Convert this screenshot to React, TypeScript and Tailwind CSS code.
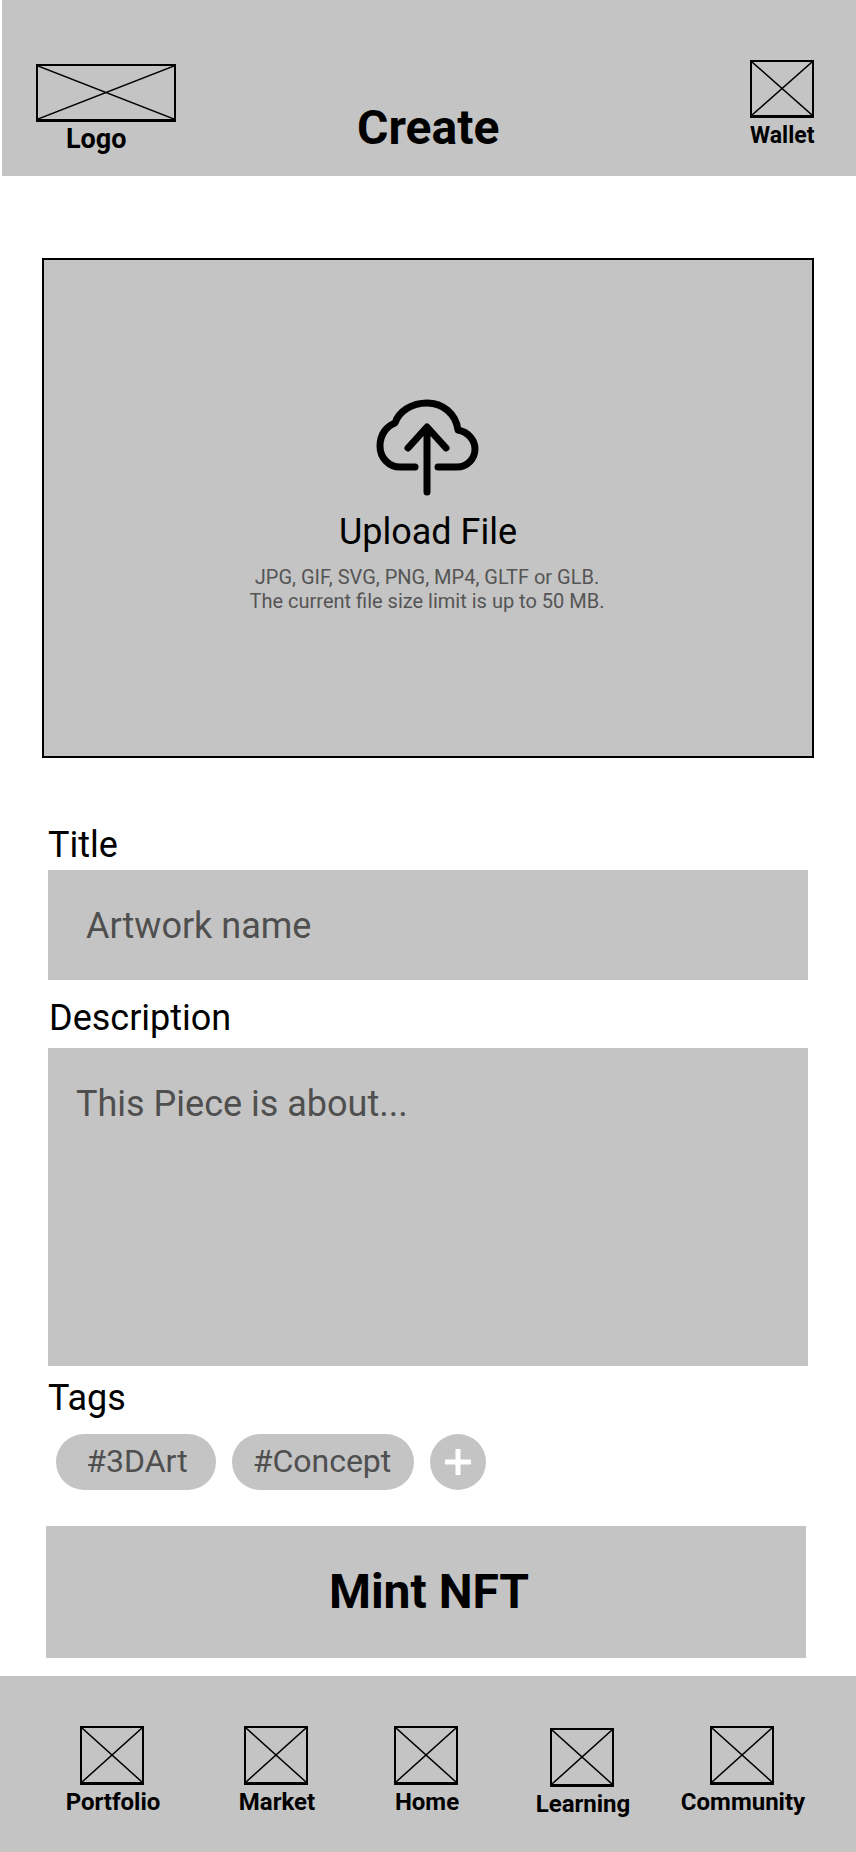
import React from 'react';

const XBox: React.FC<{ className: string }> = ({ className }) => (
  <div className={`border-2 border-black border-b-[3px] ${className}`}>
    <svg className="block w-full h-full" viewBox="0 0 100 100" preserveAspectRatio="none">
      <path d="M0 0L100 100M100 0L0 100" stroke="#000" strokeWidth="1.5" vectorEffect="non-scaling-stroke" fill="none" />
    </svg>
  </div>
);

const CloudUpload = () => (
  <svg width="104" height="98" viewBox="0 0 104 98" fill="none" stroke="#000" strokeWidth="7" strokeLinecap="round" strokeLinejoin="round" className="block">
    <path d="M39 68H24C13 68 4 59 4 47C4 35 11 27 19 24C23 12 36 4 51 4C67 4 80 15 82 31C92 33 99 41 99 50C99 60 91 68 81 68H62" />
    <path d="M32 49L51 28L70 49M51 29V93" />
  </svg>
);

const navItems = [
  { label: 'Portfolio', className: 'ml-[47px]' },
  { label: 'Market', className: 'ml-[34px]' },
  { label: 'Home', className: 'ml-[20px]' },
  { label: 'Learning', className: 'ml-[26px] mt-[2px]' },
  { label: 'Community', className: 'ml-[30px]' },
];

export default function App() {
  return (
    <div className="w-[856px] h-[1852px] bg-white overflow-hidden text-black font-['Roboto',sans-serif]">
      <header className="ml-[2px] h-[176px] bg-[#c4c4c4] flex">
        <div className="ml-[34px] mt-[64px] w-[140px]">
          <XBox className="w-[140px] h-[58px]" />
          <div className="ml-[30px] mt-[2px] text-[27px] leading-[30px] font-bold">Logo</div>
        </div>
        <h1 className="ml-[181px] mt-[100px] text-[48px] leading-[56px] font-bold">Create</h1>
        <div className="ml-auto mr-[40px] mt-[60px] w-[66px]">
          <XBox className="w-[64px] h-[58px]" />
          <div className="mt-[4px] text-[23px] leading-[27px] font-bold">Wallet</div>
        </div>
      </header>

      <section className="mt-[82px] ml-[42px] w-[772px] h-[500px] bg-[#c4c4c4] border-2 border-black flex flex-col items-center pt-[139px]">
        <CloudUpload />
        <div className="mt-[14px] text-[36px] leading-[42px]">Upload File</div>
        <div className="mt-[12px] pr-[2px] text-[20px] leading-[24px] text-[#555] text-center">
          JPG, GIF, SVG, PNG, MP4, GLTF or GLB.
          <br />
          The current file size limit is up to 50 MB.
        </div>
      </section>

      <div className="mt-[66px] ml-[48px] w-[760px]">
        <div className="text-[36px] leading-[42px]">Title</div>
        <div className="mt-[4px] h-[110px] bg-[#c4c4c4] flex items-center pl-[38px] pt-[2px] text-[36px] text-[#4f4f4f]">Artwork name</div>
        <div className="mt-[17px] ml-[1px] text-[36px] leading-[42px]">Description</div>
        <div className="mt-[9px] h-[318px] bg-[#c4c4c4] pl-[28px] pt-[34px] text-[36px] leading-[44px] text-[#4f4f4f]">This Piece is about...</div>
        <div className="mt-[11px] text-[36px] leading-[42px]">Tags</div>
        <div className="mt-[15px] ml-[8px] flex gap-[16px]">
          <div className="w-[160px] h-[56px] rounded-full bg-[#c4c4c4] flex items-center justify-center pl-[2px] pb-[2px] text-[32px] text-[#4f4f4f]">#3DArt</div>
          <div className="w-[182px] h-[56px] rounded-full bg-[#c4c4c4] flex items-center justify-center pr-[2px] pb-[2px] text-[32px] text-[#4f4f4f]">#Concept</div>
          <div className="w-[56px] h-[56px] rounded-full bg-[#c4c4c4] flex items-center justify-center">
            <svg width="28" height="28" viewBox="0 0 28 28" className="block">
              <path d="M14 1V27M1 14H27" stroke="#fff" strokeWidth="5" />
            </svg>
          </div>
        </div>
      </div>

      <button className="block mt-[36px] ml-[46px] w-[760px] h-[132px] bg-[#c4c4c4] pl-[6px] text-[48px] font-bold">Mint NFT</button>

      <nav className="mt-[18px] h-[176px] bg-[#c4c4c4] flex pt-[50px]">
        {navItems.map((item) => (
          <div key={item.label} className={`w-[130px] flex flex-col items-center ${item.className}`}>
            <XBox className="w-[64px] h-[59px]" />
            <div className="mt-[3px] pl-[2px] text-[24px] leading-[28px] font-bold whitespace-nowrap">{item.label}</div>
          </div>
        ))}
      </nav>
    </div>
  );
}
